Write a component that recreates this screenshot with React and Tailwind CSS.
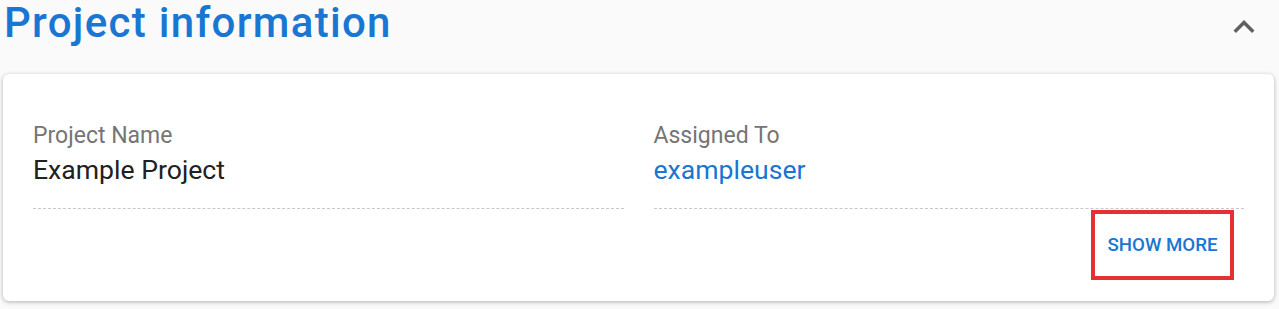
export default function App() {
  return (
    <div className="w-[1279px] h-[309px] bg-[#fafafa] overflow-hidden" style={{ fontFamily: "Roboto, 'Noto Sans', sans-serif" }}>
      <div className="flex items-start justify-between h-[74px] pl-[4px] pr-[14px]">
        <h1 className="text-[42px] leading-[46px] tracking-[1.3px] text-[#1976d2] font-medium whitespace-nowrap">Project information</h1>
        <svg width="42" height="42" viewBox="0 0 24 24" className="mt-[6px]">
          <path d="M7.41 15.41L12 10.83l4.59 4.58L18 14l-6-6-6 6z" fill="#5f5f5f" />
        </svg>
      </div>
      <div className="mx-[3px] w-[1271px] h-[227px] bg-white rounded-[6px] shadow-[0_1px_4px_rgba(0,0,0,0.3)] px-[30px] pt-[48px]">
        <div className="grid grid-cols-2 gap-[30px]">
          <div className="border-b border-dashed border-[#c8c8c8] pb-[22px]">
            <div className="text-[23px] leading-[28px] text-[#757575]">Project Name</div>
            <div className="text-[26.6px] leading-[32px] mt-[4px] text-[#212121]">Example Project</div>
          </div>
          <div className="border-b border-dashed border-[#c8c8c8] pb-[22px]">
            <div className="text-[23px] leading-[28px] text-[#757575]">Assigned To</div>
            <div className="text-[26.6px] leading-[32px] mt-[4px] text-[#1976d2]">exampleuser</div>
          </div>
        </div>
        <div className="flex justify-end pr-[10px] pt-[1px]">
          <button className="w-[143px] h-[70px] border-[4px] border-[#e53131] text-[#1976d2] text-[18.7px] font-medium uppercase">Show more</button>
        </div>
      </div>
    </div>
  );
}
